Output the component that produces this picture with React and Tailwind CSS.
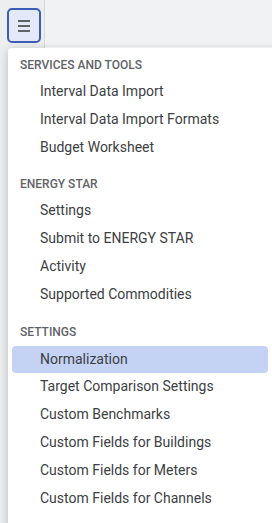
import React from "react";

const sections = [
  {
    title: "SERVICES AND TOOLS",
    mt: "",
    items: ["Interval Data Import", "Interval Data Import Formats", "Budget Worksheet"],
  },
  {
    title: "ENERGY STAR",
    mt: "mt-[8px]",
    items: ["Settings", "Submit to ENERGY STAR", "Activity", "Supported Commodities"],
  },
  {
    title: "SETTINGS",
    mt: "mt-[9px]",
    items: [
      "Normalization",
      "Target Comparison Settings",
      "Custom Benchmarks",
      "Custom Fields for Buildings",
      "Custom Fields for Meters",
      "Custom Fields for Channels",
    ],
  },
];

export default function App() {
  return (
    <div
      className="relative w-[272px] h-[523px] overflow-hidden bg-[#f1f3f4] flex"
      style={{ fontFamily: "Roboto, 'Liberation Sans', sans-serif" }}
    >
      <div className="w-[45px] h-full border-r border-[#dcdee2] bg-[#eceef0] flex flex-col items-start">
        <button className="mt-[8px] ml-[7px] w-[34px] h-[35px] rounded-[5px] border-2 border-[#3d5cb8] bg-[#e3e9f8] flex flex-col items-center justify-center gap-[3px]">
          <span className="block w-[12px] h-[2px] bg-[#5f6368]"></span>
          <span className="block w-[12px] h-[2px] bg-[#5f6368]"></span>
          <span className="block w-[12px] h-[2px] bg-[#5f6368]"></span>
        </button>
      </div>
      <div className="flex-1 flex flex-col">
        <div className="h-[47px] bg-[#f1f2f4] shadow-[0_1px_2px_rgba(0,0,0,0.08)]"></div>
        <div className="flex-1 bg-white"></div>
      </div>

      <div className="absolute left-[8px] top-[48px] w-[280px] h-[490px] bg-white rounded-tl-[4px] shadow-[0_2px_10px_rgba(0,0,0,0.22)] pt-[2px]">
        {sections.map((s) => (
          <div key={s.title} className={s.mt}>
            <div className="h-[27px] pt-[2px] flex items-center pl-[12px] text-[12px] font-medium text-[#5f6368]">
              {s.title}
            </div>
            {s.items.map((it) => (
              <div key={it} className="h-[28px] flex items-center">
                <div
                  className={
                    it === "Normalization"
                      ? "ml-[4px] w-[256px] h-[27px] mt-[2px] rounded-[4px] bg-[#c4d3f4] flex items-center pl-[28px] text-[14px] text-[#3c4043]"
                      : "ml-[4px] w-[256px] h-[27px] flex items-center pl-[28px] text-[14px] text-[#3c4043]"
                  }
                >
                  {it}
                </div>
              </div>
            ))}
          </div>
        ))}
      </div>
    </div>
  );
}
